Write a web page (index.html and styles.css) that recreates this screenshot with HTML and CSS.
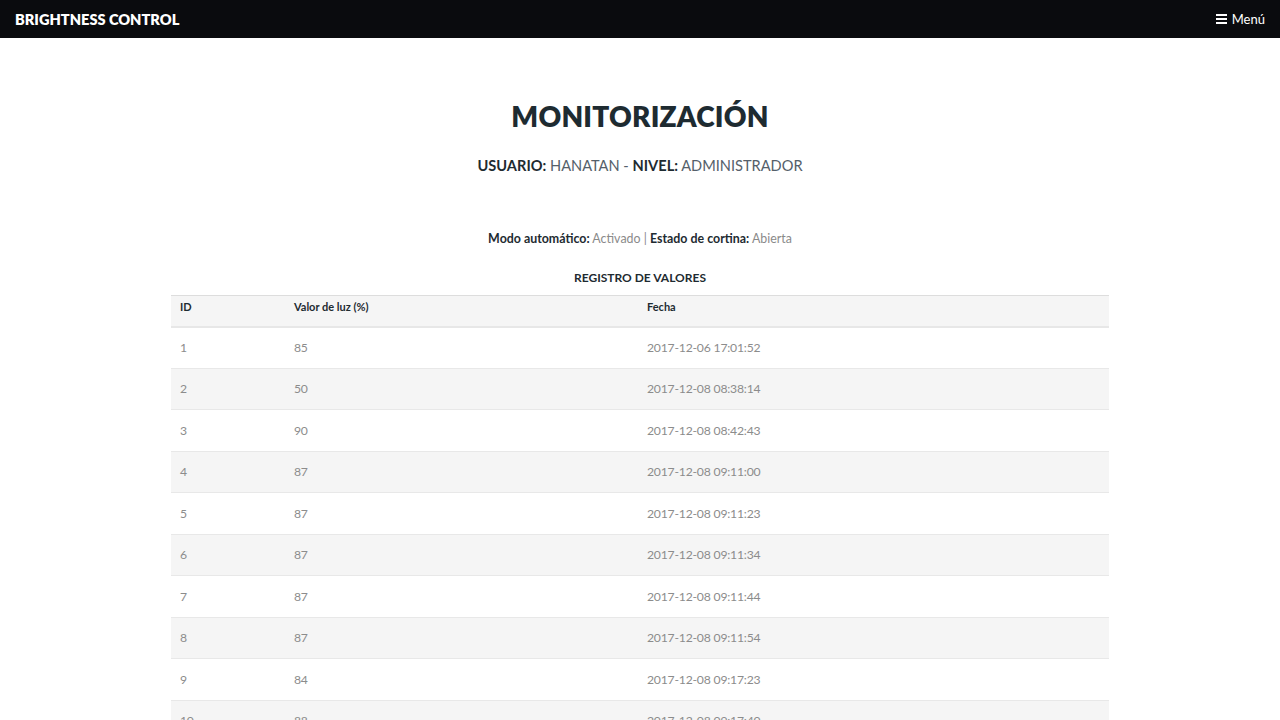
FILE: index.html
```html
<!DOCTYPE html>
<html lang="es">
<head>
<meta charset="utf-8">
<title>Brightness Control</title>
<link rel="stylesheet" href="styles.css">
</head>
<body>
<nav class="navbar">
  <a class="brand" href="#">BRIGHTNESS CONTROL</a>
  <a class="menu" href="#"><span class="bars"><i></i><i></i><i></i></span>Menú</a>
</nav>
<main class="content">
  <h1 class="title">MONITORIZACIÓN</h1>
  <p class="user"><b>USUARIO:</b> HANATAN - <b>NIVEL:</b> ADMINISTRADOR</p>
  <p class="status"><b>Modo automático:</b> Activado | <b>Estado de cortina:</b> Abierta</p>
  <h2 class="caption">REGISTRO DE VALORES</h2>
  <table class="table">
    <thead>
      <tr><th class="c-id">ID</th><th class="c-val">Valor de luz (%)</th><th>Fecha</th></tr>
    </thead>
    <tbody>
      <tr><td>1</td><td>85</td><td>2017-12-06 17:01:52</td></tr>
      <tr><td>2</td><td>50</td><td>2017-12-08 08:38:14</td></tr>
      <tr><td>3</td><td>90</td><td>2017-12-08 08:42:43</td></tr>
      <tr><td>4</td><td>87</td><td>2017-12-08 09:11:00</td></tr>
      <tr><td>5</td><td>87</td><td>2017-12-08 09:11:23</td></tr>
      <tr><td>6</td><td>87</td><td>2017-12-08 09:11:34</td></tr>
      <tr><td>7</td><td>87</td><td>2017-12-08 09:11:44</td></tr>
      <tr><td>8</td><td>87</td><td>2017-12-08 09:11:54</td></tr>
      <tr><td>9</td><td>84</td><td>2017-12-08 09:17:23</td></tr>
      <tr><td>10</td><td>88</td><td>2017-12-08 09:17:40</td></tr>
      <tr><td>11</td><td>88</td><td>2017-12-08 09:17:52</td></tr>
    </tbody>
  </table>
</main>
</body>
</html>
```

FILE: styles.css
```css
html, body {
  margin: 0;
  padding: 0;
  background: #fff;
  font-family: "Lato", "Open Sans", sans-serif;
  color: #1e2b31;
}
.navbar {
  height: 38px;
  background: #0a0b0e;
  display: flex;
  align-items: center;
  justify-content: space-between;
  padding: 0 15px;
  box-sizing: border-box;
}
.brand {
  color: #fff;
  font-weight: 800;
  font-size: 14.6px;
  text-decoration: none;
}
.menu {
  color: #fff;
  font-size: 13px;
  text-decoration: none;
  display: flex;
  align-items: center;
  gap: 5px;
}
.bars {
  display: flex;
  flex-direction: column;
  gap: 2px;
  width: 11px;
}
.bars i {
  display: block;
  height: 2px;
  background: #fff;
}
.content {
  width: 938px;
  margin: 0 auto;
  padding-top: 59px;
  text-align: center;
}
.title {
  margin: 0;
  font-size: 28px;
  font-weight: 800;
  line-height: 38px;
  color: #1e2b31;
  letter-spacing: 0.2px;
}
.user {
  margin: 21px 0 0;
  font-size: 14.6px;
  line-height: 20px;
  color: #55606a;
}
.user b {
  color: #1e2b31;
  font-weight: 700;
}
.status {
  margin: 54px 0 0;
  font-size: 12.4px;
  line-height: 18px;
  color: #8a8a8a;
}
.status b {
  color: #1e2b31;
  font-weight: 700;
}
.caption {
  margin: 22px 0 0;
  font-size: 12px;
  font-weight: 700;
  line-height: 16px;
  color: #1e2b31;
}
.table {
  margin-top: 9px;
  width: 100%;
  border-collapse: collapse;
  text-align: left;
}
.table th {
  font-size: 11px;
  font-weight: 700;
  color: #1e2b31;
  background: #f5f5f5;
  height: 31px;
  padding: 0 9px 8px;
  border-top: 1px solid #dddddd;
  border-bottom: 2px solid #e7e7e7;
  box-sizing: border-box;
}
.table td {
  font-size: 12.2px;
  color: #8c8c8c;
  height: 41.5px;
  padding: 0 9px;
  border-bottom: 1px solid #e8e8e8;
  box-sizing: border-box;
  letter-spacing: -0.2px;
}
.table tbody tr:nth-child(even) td {
  background: #f5f5f5;
}
.c-id { width: 114px; }
.c-val { width: 353px; }
```
